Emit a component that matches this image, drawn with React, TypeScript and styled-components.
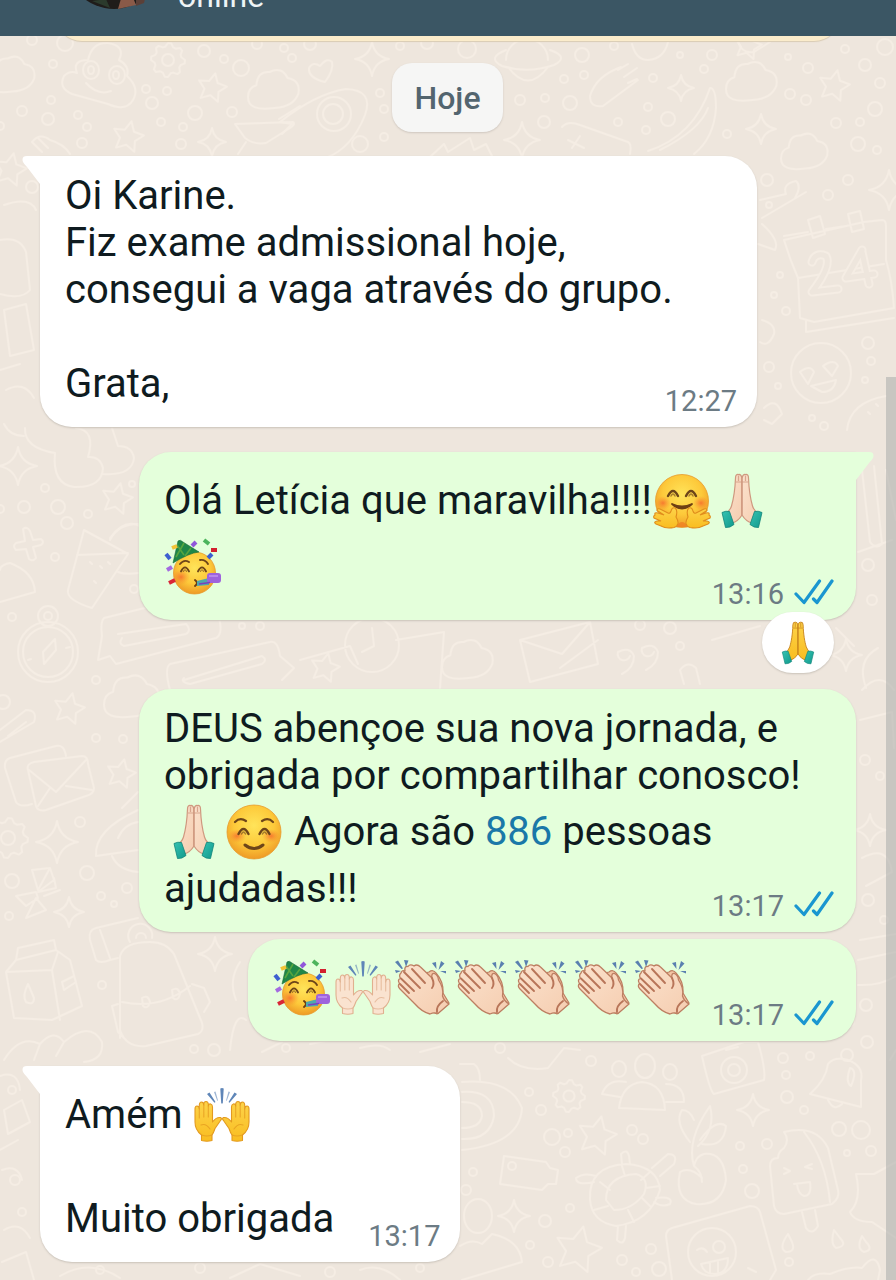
import React from 'react';
import styled, { createGlobalStyle } from 'styled-components';

const GlobalStyle = createGlobalStyle`
  *, *::before, *::after { box-sizing: border-box; }
  html, body { margin: 0; padding: 0; }
  body { background: #eee6dd; font-family: Roboto, "Liberation Sans", sans-serif; color: #0f1b20; }
`;

const Screen = styled.div`
  position: relative;
  display: flex;
  flex-direction: column;
  min-height: 100vh;
  overflow: hidden;
`;

const Wallpaper = styled.svg`
  position: absolute;
  inset: 0;
  width: 100%;
  height: 100%;
`;

const Header = styled.header`
  position: relative;
  z-index: 2;
  display: flex;
  align-items: flex-end;
  gap: 16px;
  height: 36px;
  padding: 0 66px 27px;
  background: #3b5664;
  overflow: hidden;
`;

const Avatar = styled.svg`
  flex: none;
  width: 96px;
  height: 96px;
`;

const Status = styled.span`
  font-size: 32px;
  line-height: 26px;
  color: #eef4f6;
`;

const Chat = styled.main`
  position: relative;
  display: flex;
  flex-direction: column;
  flex: 1;
  padding: 0 40px 19px;
`;

const Notice = styled.div`
  height: 60px;
  margin: -55px 16px 22px;
  border-radius: 26px;
  background: #fbeccb;
  box-shadow: 0 1px 1px #d9cbb3;
`;

const DayLabel = styled.div`
  align-self: center;
  margin-bottom: 24px;
  margin-right: 1px;
  padding: 17px 22px 15px;
  border-radius: 20px;
  background: #f6f6f5;
  box-shadow: 0 1px 2px #cfc7bf;
  color: #53656f;
  font-size: 32px;
  font-weight: 500;
  line-height: 37px;
`;

const Messages = styled.ol`
  display: flex;
  flex-direction: column;
  align-items: flex-start;
  margin: 0;
  padding: 0;
  list-style: none;
`;

type BubbleProps = { $out?: boolean; $full?: boolean; $tail?: boolean; $gap?: number };

const Bubble = styled.li<BubbleProps>`
  position: relative;
  display: grid;
  grid-template-columns: ${p => (p.$full ? '1fr' : 'auto auto')};
  column-gap: ${p => (p.$out ? 19 : 34)}px;
  align-self: ${p => (p.$out ? 'flex-end' : 'flex-start')};
  width: ${p => (p.$full ? 'calc(100% - 99px)' : 'auto')};
  max-width: calc(100% - 99px);
  margin-top: ${p => p.$gap ?? 0}px;
  padding: 16px ${p => (p.$out ? 22 : 20)}px 19px 25px;
  border-radius: 32px;
  ${p => p.$tail && (p.$out ? 'border-top-right-radius: 0;' : 'border-top-left-radius: 0;')}
  background: ${p => (p.$out ? '#e4ffdb' : '#ffffff')};
  box-shadow: 0 1px 2px #c9c2b9;
`;

const TailShape = styled.svg<{ $out?: boolean }>`
  position: absolute;
  top: 0;
  ${p => (p.$out ? 'right: -18px; transform: scaleX(-1);' : 'left: -18px;')}
  width: 19px;
  height: 32px;
`;

const Body = styled.div`
  grid-area: 1 / 1;
  min-width: 0;
  padding-bottom: 1px;
`;

const Line = styled.div<{ $tall?: boolean }>`
  min-height: ${p => (p.$tall ? 66 : 47)}px;
  font-size: 40px;
  line-height: ${p => (p.$tall ? 66 : 47)}px;
`;

const Meta = styled.div<{ $full?: boolean }>`
  grid-area: 1 / ${p => (p.$full ? 1 : 2)};
  place-self: end;
  display: flex;
  align-items: center;
  gap: 10px;
  margin-bottom: -10px;
  color: #6c7b84;
  font-size: 29px;
  line-height: 34px;
`;

const Ticks = styled.svg`
  width: 40px;
  height: 28px;
  margin-bottom: 4px;
`;

const NumberLink = styled.a`
  color: #1a78a8;
  text-decoration: none;
`;

const Glyph = styled.svg<{ $size: number }>`
  width: ${p => p.$size}px;
  height: ${p => p.$size}px;
  margin: -4px ${p => (p.$size > 50 ? 2 : 0)}px 0;
  vertical-align: middle;
  overflow: visible;
`;

const Reaction = styled.button`
  position: absolute;
  right: 22px;
  bottom: -53px;
  z-index: 1;
  display: flex;
  align-items: center;
  justify-content: center;
  width: 72px;
  height: 61px;
  padding: 4px 0 0;
  border: 0;
  border-radius: 31px;
  background: #fff;
  box-shadow: 0 1px 2px #c9c2b9;
`;

const ScrollThumb = styled.div`
  position: absolute;
  right: 0;
  top: 377px;
  bottom: 0;
  width: 10px;
  background: rgba(170, 172, 170, 0.55);
`;

/* ---------- Emoji ---------- */

type EmojiName = 'party' | 'hug' | 'pray' | 'prayYellow' | 'smile' | 'raise' | 'raiseYellow' | 'clap';

const labels: Record<EmojiName, string> = {
  party: 'Rosto festivo',
  hug: 'Rosto abraçando',
  pray: 'Mãos juntas',
  prayYellow: 'Mãos juntas',
  smile: 'Rosto sorridente',
  raise: 'Mãos para cima',
  raiseYellow: 'Mãos para cima',
  clap: 'Mãos aplaudindo',
};

const HiddenDefs = styled.svg`
  position: absolute;
  width: 0;
  height: 0;
`;

const EmojiDefs = () => (
  <HiddenDefs aria-hidden="true">
    <defs>
      <radialGradient id="face" cx="0.5" cy="0.38" r="0.62">
        <stop offset="0" stopColor="#ffe45a" />
        <stop offset="0.6" stopColor="#fdc93a" />
        <stop offset="1" stopColor="#ee9a26" />
      </radialGradient>
      <radialGradient id="blush">
        <stop offset="0" stopColor="#f5602c" stopOpacity="0.75" />
        <stop offset="1" stopColor="#f58a2c" stopOpacity="0" />
      </radialGradient>
      <linearGradient id="skin" x1="0" y1="0" x2="1" y2="1">
        <stop offset="0" stopColor="#fbe2cd" />
        <stop offset="1" stopColor="#f5cdb0" />
      </linearGradient>
      <linearGradient id="gold" x1="0" y1="0" x2="0" y2="1">
        <stop offset="0" stopColor="#fdd34a" />
        <stop offset="1" stopColor="#f9bd20" />
      </linearGradient>
      <linearGradient id="cuff" x1="0" y1="0" x2="1" y2="1">
        <stop offset="0" stopColor="#35c3b2" />
        <stop offset="1" stopColor="#11998c" />
      </linearGradient>
    </defs>
  </HiddenDefs>
);

const Eyes = ({ y, l, r, s = 1 }: { y: number; l: number; r: number; s?: number }) => (
  <g fill="none" stroke="#6d4519" strokeWidth={2.4 * s} strokeLinecap="round">
    {[l, r].map(x => (
      <g key={x}>
        <path d={`M${x - 5 * s} ${y + 3 * s} Q${x} ${y - 7 * s} ${x + 5 * s} ${y + 3 * s}`} />
        <path d={`M${x - 2 * s} ${y + 3 * s} Q${x} ${y - 1 * s} ${x + 2 * s} ${y + 3 * s}`} strokeWidth={1.5 * s} opacity="0.6" />
      </g>
    ))}
  </g>
);

const PrayArt = ({ fill, line }: { fill: string; line: string }) => (
  <g stroke={line} strokeWidth="1.2" strokeLinejoin="round">
    <g fill={fill}>
      <path d="M28 5 Q27 1 24.500 1.500 Q21.500 1 21.500 5 C21 18 19.500 26 17.500 33 Q16 38 11 41 L18 50 Q24 48.500 28 42Z" />
      <path d="M28 5 Q29 1 31.500 1.500 Q34.500 1 34.500 5 C35 18 36.500 26 38.500 33 Q40 38 45 41 L38 50 Q32 48.500 28 42Z" />
    </g>
    <path d="M28 4V42M22 9h12M24.500 2.500V8M31.500 2.500V8" fill="none" opacity="0.8" />
    <path d="M8 39.500 Q12 37.500 15.500 38.500 L20 51.500 Q16 55 11.500 54.500Z" fill="url(#cuff)" stroke="#0f8479" strokeWidth="0.8" />
    <path d="M48 39.500 Q44 37.500 40.500 38.500 L36 51.500 Q40 55 44.500 54.500Z" fill="url(#cuff)" stroke="#0f8479" strokeWidth="0.8" />
  </g>
);

const RaiseArt = ({ fill, line }: { fill: string; line: string }) => {
  const hand =
    'M7.500 53.500 V48 Q1 43 1 35 V22 Q1 19 3 19 Q5 19 5.300 22 V18 Q5.500 15 7.500 15 Q9.500 15 9.800 18 V17 Q10 14.500 12 14.500 Q14 14.500 14.300 17 V19 Q14.800 16.500 16.700 17 Q18.500 17.500 18.500 20 V35 Q22 30 26.500 30.500 Q28.500 31.500 26.500 33.500 L21 41.500 Q19.500 46 18 48 V53.500 Q13 55 7.500 53.500Z';
  const marks = 'M5.300 22v9M9.800 18v12M14.300 19v11M7 38Q12 36 16 42M7.500 48Q13 50 18 48';
  return (
    <g stroke={line} strokeWidth="1.100" strokeLinejoin="round" strokeLinecap="round">
      {['', 'translate(56 0) scale(-1 1)'].map(t => (
        <g key={t} transform={t}>
          <path d={hand} fill={fill} />
          <path d={marks} fill="none" opacity="0.75" />
        </g>
      ))}
      <g stroke="none" fill="#5f86b8">
        <path d="M26.300 1.500Q28 0.500 29.700 1.500L28.800 16Q28 17.500 27.200 16Z" />
        <path d="M13 7L15.500 5.500L21.500 15L20.500 15.800Z M43 7L40.500 5.500L34.500 15L35.500 15.800Z" />
        <path d="M20 5l1.500-.6L24 13.500l-.8.300Z M36 5l-1.500-.6L32 13.500l.8.300Z" opacity="0.6" />
      </g>
    </g>
  );
};

const art: Record<EmojiName, React.ReactNode> = {
  smile: (
    <g>
      <circle cx="28" cy="28" r="27" fill="url(#face)" stroke="#e79a2c" strokeWidth="0.8" />
      <ellipse cx="11" cy="32" rx="9" ry="7" fill="url(#blush)" />
      <ellipse cx="45" cy="32" rx="9" ry="7" fill="url(#blush)" />
      <path d="M9 18Q14 13 20 17M36 17Q42 13 47 18" fill="none" stroke="#6d4519" strokeWidth="2.200" strokeLinecap="round" />
      <path d="M19 41Q28 48 37 41" fill="none" stroke="#6d4519" strokeWidth="3" strokeLinecap="round" />
      <Eyes y={27} l={17.5} r={38.5} />
    </g>
  ),
  hug: (
    <g>
      <circle cx="28" cy="28" r="26.500" fill="url(#face)" stroke="#e79a2c" strokeWidth="0.8" />
      <ellipse cx="9" cy="30" rx="8" ry="7" fill="url(#blush)" />
      <ellipse cx="47" cy="30" rx="8" ry="7" fill="url(#blush)" />
      <path d="M18 31Q28 40 38 31Q28 36 18 31Z" fill="#6d3f13" stroke="#6d3f13" strokeWidth="1.800" strokeLinejoin="round" />
      <Eyes y={20} l={19} r={37} />
      <path d="M22 54Q28 44 34 54Z" fill="#ef7a22" opacity="0.7" />
      {['', 'translate(56 0) scale(-1 1)'].map(t => (
        <path
          key={t}
          transform={t}
          d="M1 42Q0 39 4 40L10 42L3 37.500Q3 35 6 36L14 40Q16 41 17 38Q18 34 21 35Q24 37 22 44Q27 52 20 54.500Q12 56 7 53L2 51Q-1 49 3 48L7 48L0 45Q-1 43 1 42Z"
          fill="url(#gold)"
          stroke="#e08d1c"
          strokeWidth="1.100"
        />
      ))}
    </g>
  ),
  party: (
    <g>
      <circle cx="28.500" cy="34" r="21" fill="url(#face)" stroke="#e79a2c" strokeWidth="0.8" />
      <ellipse cx="15" cy="38" rx="9" ry="8" fill="url(#blush)" />
      <path d="M7 24L12 2Q14 0 17 3L33 13Q23 14 7 24Z" fill="#1f8748" stroke="#176b39" strokeWidth="0.6" />
      <path d="M11 6l7 10M18 4l-8 14M25 9l-6 8" stroke="#57a53f" strokeWidth="1.600" fill="none" />
      <path d="M14 25Q18 20 23 23M34 21Q39 20 42 25" fill="none" stroke="#6d4519" strokeWidth="1.900" strokeLinecap="round" />
      <Eyes y={30} l={19} r={36} s={0.8} />
      <path d="M29 41Q33 44 29 47" fill="none" stroke="#6d3f13" strokeWidth="2" strokeLinecap="round" />
      <path d="M31 42L43 39V46L31 47Z" fill="#4fa8ac" />
      <rect x="41" y="34" width="14" height="10" rx="3" fill="#9e63dc" />
      <path d="M43 37H52" stroke="#b987ec" strokeWidth="2" />
      <path d="M33 45L44 43.500" stroke="#7a3fc0" strokeWidth="1.600" />
      <g strokeWidth="4" fill="none">
        <path d="M0 15l4 5" stroke="#3d5fd0" />
        <path d="M1 31l5-3" stroke="#a36be0" />
        <path d="M3 44l6-3" stroke="#d92638" />
        <path d="M6 9l5-2" stroke="#f2c437" />
        <path d="M26 7l4-4" stroke="#9157da" />
        <path d="M38 1l5 4" stroke="#4cb45c" />
        <path d="M45 11h6" stroke="#d3202f" />
        <path d="M42 19l4-4" stroke="#3d5fd0" />
      </g>
    </g>
  ),
  pray: <PrayArt fill="url(#skin)" line="#cf987f" />,
  prayYellow: <PrayArt fill="url(#gold)" line="#c9861d" />,
  raise: <RaiseArt fill="#fae3d0" line="#e0b08f" />,
  raiseYellow: <RaiseArt fill="url(#gold)" line="#e39a1f" />,
  clap: (
    <g strokeLinejoin="round" strokeLinecap="round">
      <path d="M26 14L34 12Q38 9 41 13Q49 22 48 33L54 43L42 54L33 50Z" fill="#f3c6a5" stroke="#bd7f62" strokeWidth="1.200" />
      <path
        d="M6 13Q7 9.500 10 11Q9 6 13 6.500Q15 3.500 19 6Q22 3.500 25.500 7L37 18Q36 13 39.500 13.500Q43 15 43.500 20Q49 28 47.500 36Q49 41 54 44L43 53.500Q39 52 35 54Q27 52 20 44L5 29Q2 26 4.500 23.500Q2 19.500 5.500 18.500Q3.500 15 6 13Z"
        fill="url(#skin)"
        stroke="#bd7f62"
        strokeWidth="1.300"
      />
      <path d="M5 24L14 33M6 18.500L19 31M9 12L25 28M17 9L30 23M37 18Q40 24 37 28M42 52Q41 46 48 41" fill="none" stroke="#b87559" strokeWidth="1.900" />
      <g fill="#5a80b0">
        <path d="M0 2L3 0.500L8 8.500L6.500 9Z M9 0L13.500 0.500L11 7Z M0 10L6 11L1 13Z" />
        <path d="M46 1L49.500 3.500L43.500 10Z M37 3L41 2L41.500 9Z M45 11L51 11L51 13.500Z" />
      </g>
    </g>
  ),
};

const Emoji = ({ name, size = 56 }: { name: EmojiName; size?: number }) => (
  <Glyph $size={size} viewBox="0 0 56 56" role="img" aria-label={labels[name]}>
    {art[name]}
  </Glyph>
);

/* ---------- Wallpaper doodles ---------- */

const rings = `32,40,5 65,43,8 53,64,4 51,100,4 22,111,5 48,119,6 78,115,4 87,127,4 82,143,5 0,126,4 146,89,4 167,91,4
152,103,6 195,113,7 161,122,4 183,127,4 181,144,5 204,51,6 224,59,4 241,68,8 257,44,5 284,48,4 292,58,4 232,112,5
32,187,6 310,44,6 400,46,4 427,43,6 467,49,9 380,93,4 384,109,4 360,144,8 384,137,4 520,100,5 545,98,4 544,122,6 564,79,4
582,55,7 584,75,4 614,46,4 570,103,7 653,78,4 648,107,4 668,119,7 646,130,4 618,122,4 680,55,3 712,55,5
704,69,4 727,134,4 788,57,3 808,68,5 790,94,5 806,100,5 845,49,4 865,65,6 885,47,8 880,83,5 875,109,7 860,122,4 836,123,5
858,144,7 877,150,4 767,180,6 848,180,5 828,195,5 769,205,3 780,275,3 774,295,3 786,311,4 868,343,6 871,361,4 769,367,5
865,380,3 778,386,3 812,418,3 824,426,4 45,488,4 24,507,6 58,507,7 0,509,4 88,514,4 67,523,6 55,557,4 132,484,3 134,589,4
12,617,4 96,680,4 3,702,7 96,738,4 123,739,4 80,822,5 87,873,7 12,881,7 101,896,4 127,888,5 114,904,3 9,916,4 102,985,4
194,1049,4 214,1050,6 242,626,3 260,626,4 286,1048,4 640,625,5 670,628,6 680,646,4 868,565,6 872,600,5 865,760,5 880,776,4
868,900,6 884,920,4 866,1005,6 850,1022,4 500,1048,5 591,1061,5 529,1092,4 541,1110,5 552,1137,8 568,1133,4 565,1152,5
632,1130,5 643,1139,5 473,1172,4 466,1190,5 570,1208,4 545,1221,6 530,1245,4 548,1262,5 651,1249,5 622,1260,5 636,1272,4
659,1269,7 783,1058,5 810,1056,4 786,1075,4 787,1097,6 804,1110,4 740,1146,4 767,1144,5 743,1169,4 752,1191,7 839,1129,7
861,1130,9 871,1151,5 847,1153,3 789,1262,4 867,1042,6 12,1090,4 15,1180,5 22,1212,4 100,1270,4 200,1268,5 330,1272,5
420,1268,4`
  .split(/\s+/)
  .map(t => t.split(',').map(Number));

const stars = [
  [212, 88, 15], [128, 137, 16], [10, 170, 17], [834, 86, 16], [117, 499, 16], [69, 709, 16], [121, 774, 15],
  [748, 46, 14], [597, 1136, 20], [325, 668, 15], [578, 1250, 24],
];
const sparks = [
  [212, 142, 14], [372, 59, 17], [522, 140, 18], [681, 88, 13], [761, 129, 15], [889, 190, 20], [18, 466, 19], [57, 842, 21],
  [69, 912, 15], [215, 954, 17], [753, 1110, 16], [514, 1216, 16], [846, 655, 16], [870, 830, 16],
];
const clouds = [
  [10, 75, 1.1], [272, 90, 1.2], [750, 82, 1.2], [803, 152, 1.1], [130, 697, 1.3], [466, 660, 1.2],
];
const gears = [
  [168, 60, 17], [8, 838, 20], [569, 1096, 16],
];

const starPath = (r: number) =>
  Array.from({ length: 10 }, (_, i) => {
    const a = (i * Math.PI) / 5 - 1.35;
    const d = i % 2 ? r * 0.5 : r;
    return `${i ? 'L' : 'M'}${(Math.cos(a) * d).toFixed(1)} ${(Math.sin(a) * d).toFixed(1)}`;
  }).join('') + 'Z';

const gearPath = (r: number) =>
  Array.from({ length: 32 }, (_, i) => {
    const a = (i * Math.PI) / 16;
    const d = i % 4 < 2 ? r : r * 0.8;
    return `${i ? 'L' : 'M'}${(Math.cos(a) * d).toFixed(1)} ${(Math.sin(a) * d).toFixed(1)}`;
  }).join('') + 'Z';

const sparkPath = (r: number) =>
  `M0 ${-r}Q${r * 0.15} ${-r * 0.15} ${r} 0Q${r * 0.15} ${r * 0.15} 0 ${r}Q${-r * 0.15} ${r * 0.15} ${-r} 0Q${-r * 0.15} ${-r * 0.15} 0 ${-r}Z`;

const drawings = [
  // smiling pile
  'M88 60Q92 42 108 43Q126 46 119 60Q130 66 127 76Q140 88 133 100Q126 112 108 104L72 94Q58 88 64 76Q70 70 77 73Q72 60 88 60ZM86 83Q98 96 111 91',
  'M83 70a8 9 0 1 0 16 0a8 9 0 1 0-16 0M88 70a3 4 0 1 0 6 0a3 4 0 1 0-6 0M109 75a8 9 0 1 0 16 0a8 9 0 1 0-16 0M113 75a3 4 0 1 0 6 0a3 4 0 1 0-6 0',
  // fork and cap
  'M32 142Q40 132 50 140Q64 144 70 154M32 142l10 10M38 138l10 10M235 124L293 122Q296 124 290 128L266 143Q254 145 245 138ZM279 119L300 106M246 142L238 154',
  // heart
  'M325 82Q308 78 309 68Q313 61 320 66Q327 57 332 62Q334 70 325 82Z',
  // comet
  'M280 122Q315 94 346 89Q374 90 365 115Q352 148 326 158M280 122L292 124L282 134M317 114a17 17 0 1 0 34 0a17 17 0 1 0-34 0M323 114a10 10 0 1 0 20 0a10 10 0 1 0-20 0',
  // planet
  'M506 60a21 21 0 1 1 42 0M508 67Q528 94 548 67M506 50Q486 58 502 66Q528 74 554 65Q570 57 550 50M430 157L444 144L448 152L470 138L474 150L486 144L492 156',
  // mitten, banana, game pad
  'M621 67Q596 76 590 96Q590 108 603 106L638 80M618 70l10-6M624 77l13-9M628 83l9-4M648 151Q694 136 710 88Q716 88 716 108Q714 138 694 154M660 150Q700 130 708 108M562 127Q568 120 580 125L628 142Q632 144 630 154M568 140l16 8M572 148l8-12',
  'M632 44Q636 60 648 60Q664 59 668 42M738 42Q742 54 754 52L770 42',
  // rocket tail
  'M760 200L786 194M786 194Q782 184 796 181Q802 186 795 198M806 192L762 218M762 224Q780 240 775 250L758 244',
  // calendar
  'M784 236L808 232M826 229L846 226M864 222L882 220Q886 220 886 226L886 260Q892 280 894 308L814 322L800 318L798 278Q790 260 784 240ZM798 278L884 264M806 320L806 332L894 318M808 220l12-4l5 18l-12 4ZM848 214l12-3l4 18l-12 3Z',
  // heart-eyed face
  'M791 373a30 30 0 1 0 60 0a30 30 0 1 0-60 0M800 372Q810 364 814 372L808 384ZM823 366Q834 358 838 366L832 376ZM811 386L836 380Q834 392 822 392Z',
  'M847 430Q850 402 886 396M868 412l2 2M876 404l2 2M762 320q14 4 12 14q-6 14-14 8M764 408Q776 396 782 414L772 424L764 420',
  // left strip
  'M4 205Q30 196 36 210M0 240Q20 236 26 252L30 290Q22 300 0 294M4 310L26 304L34 350L10 356ZM0 370L20 364M6 390Q24 380 34 398',
  'M25 428Q24 448 55 453Q52 484 74 487Q102 488 103 468Q100 456 88 457Q96 430 76 428M103 474Q132 476 134 458Q132 446 118 446L112 428M4 424Q10 436 24 436',
  // glass
  'M84 530L68 590Q66 600 92 608L128 554ZM77 555L128 553M110 538Q124 518 140 526M90 562l2 2M100 566l2 2M108 562l2 2M94 581l2 2',
  'M110 540Q118 524 138 524M118 572Q126 575 138 573M0 602L35 592Q34 572 10 563Q0 565 0 570',
  // plus-shaped flower
  'M23 529q4-3 7 2l3 9l8-1q4 3 0 6l-8 2l3 11q-3 4-7 1l-3-10l-10 1q-4-4 0-7l9-2Z',
  // compass
  'M18 652a30 30 0 1 0 60 0a30 30 0 1 0-60 0M23 652a25 25 0 1 0 50 0a25 25 0 1 0-50 0M38 616a10 10 0 1 1 20 0a10 10 0 0 1-20 0M44 616a4 4 0 1 0 8 0a4 4 0 1 0-8 0M55 639L43 652L44 664L56 650ZM28 660l3-1M66 648l4-1',
  // chat notes
  'M104 618L218 590M104 618Q100 622 102 636L98 660L110 656L116 664L216 638Q224 634 218 614M118 634L186 624Q192 630 186 634L124 646Q118 644 122 638M170 690Q164 668 170 664L270 642Q278 640 280 656L294 668L282 680M184 680L262 656Q268 660 262 664L190 684Q180 682 184 678',
  // middle strip
  'M300 660L350 646L358 664M345 645a27 27 0 1 0 54 0a27 27 0 1 0-54 0M372 628l2 18l-12 6M396 640L444 632L440 688M520 640L590 622L598 664L530 682ZM520 640L562 654L590 622M560 668L598 640',
  'M618 652Q630 646 634 656Q634 668 622 674M618 652a6 6 0 1 0 12 4M642 648Q654 642 658 652Q658 664 646 670M642 648a6 6 0 1 0 12 4M684 684L680 670Q688 660 696 668L700 684M712 640L760 626M836 628L854 646M866 688Q856 660 878 648',
  // envelopes
  'M66 756Q64 744 56 746L10 758Q4 760 5 768L16 802Q20 808 32 804M28 770Q26 764 34 762L82 756Q88 756 88 764L94 788Q94 794 86 796L46 810Q38 812 36 806ZM29 770L56 792L86 760M38 806L50 788M66 786L92 790M0 730L26 710Q38 710 34 722L0 742M8 736L26 722',
  // helmet
  'M96 856Q94 830 138 810M96 856L138 850M118 838Q124 824 138 822M112 856Q118 870 138 872M122 808L138 792',
  // pinwheel
  'M32 870L50 868L38 890ZM50 868L54 880L38 892L56 888L54 878M36 892L16 896L26 906L38 898ZM36 898L26 918L46 910ZM44 896L60 890',
  // carton
  'M18 948L54 940L56 950L16 960ZM16 960L6 972L14 1018L52 1020L82 1006L70 960L56 950M6 972L52 970L60 1020M52 970L58 952M28 984q-6 12-2 18q8 4 8-4ZM62 982l12-6l2 6l-12 8Z',
  // camera and backpack
  'M138 918L96 928Q88 930 90 940L96 960Q100 964 110 960L118 958M100 930L110 958M130 942a12 12 0 1 1 22-4M136 938a5 5 0 1 1 10 0M160 920L186 930M120 1038L120 956Q124 942 150 942Q166 942 174 954L200 1018Q206 1030 198 1034L146 1046Q126 1048 120 1030M122 1002Q160 1010 190 986M142 998q6-4 8 4q-2 8-7 4ZM172 990q6-4 8 4q-2 8-7 4ZM118 1004L112 1006L118 1032L126 1040M192 984L204 988L210 1002L204 1012M240 962Q228 980 236 1000',
  // bread
  'M4 1060Q20 1034 40 1044L34 1060M40 1044Q54 1028 64 1042L56 1056M64 1042Q90 1020 102 1042Q104 1060 84 1062M230 1050Q234 1010 246 1020',
  'M0 1076Q18 1070 20 1090M4 1110L22 1100L30 1122L8 1134ZM0 1150L18 1140M2 1170q16-6 20 10M4 1230Q20 1220 30 1238M2 1262L26 1252L34 1280M60 1276Q90 1258 120 1278M230 1278L260 1264L300 1276M360 1270Q380 1262 400 1280',
  'M310 1044L340 1038M360 1048Q380 1042 390 1050M420 1052L450 1044M262 1052L282 1042',
  // people
  'M635 1066a10 12 0 1 0 20 0a10 12 0 1 0-20 0M612 1069a7 8 0 1 0 14 0a7 8 0 1 0-14 0M619 1108L665 1110Q664 1084 642 1082Q622 1084 619 1108ZM663 1072a7 8 0 1 0 14 0a7 8 0 1 0-14 0M602 1094Q608 1078 626 1082M602 1094L620 1097M666 1084Q684 1084 684 1102L666 1102',
  // pot, lens
  'M508 1058Q522 1072 548 1068L564 1048L580 1050M460 1064L474 1064Q480 1068 480 1080M462 1082Q510 1078 522 1108Q520 1144 462 1150M462 1092Q494 1090 494 1116Q490 1140 462 1139M462 1102Q482 1102 482 1116Q480 1128 462 1128',
  // camera
  'M702 1056L744 1042L758 1042Q766 1070 764 1080L714 1094Q710 1092 702 1056ZM721 1070a13 13 0 1 0 26 0a13 13 0 1 0-26 0M728 1070a6 6 0 1 0 12 0a6 6 0 1 0-12 0M726 1050l12-3',
  // bell
  'M810 1094Q826 1080 828 1064Q834 1056 848 1060Q864 1066 861 1080L861 1107ZM841 1055a6 6 0 1 1 12 0a6 6 0 1 1-12 0M828 1100Q834 1112 842 1104M850 1068q8 2 1 18q-6-4-1-18',
  // cherry
  'M702 1178Q690 1166 680 1172Q674 1200 696 1204Q722 1206 726 1180Q724 1152 704 1154Q696 1156 694 1166Q702 1172 702 1182M694 1166Q686 1140 710 1106Q716 1130 698 1146M690 1142Q674 1122 682 1110Q690 1110 694 1120M700 1140Q716 1118 726 1126Q724 1148 702 1144',
  // video
  'M504 1156L546 1162L550 1168L558 1170L556 1184L548 1184L542 1190L500 1184ZM508 1166a4 4 0 1 0 8 0a4 4 0 1 0-8 0',
  // turtle
  'M590 1200Q588 1166 626 1164Q658 1166 660 1190Q650 1222 616 1226Q592 1222 590 1200ZM606 1200Q606 1176 636 1174Q650 1178 644 1194Q632 1210 614 1210ZM600 1182l10 8M622 1166l3 10M650 1172l-9 8M660 1186l-14 2M650 1206l-8-8M634 1222l-6-12M594 1210l14-4M618 1226l-1 14q6 6 8-2l1-12M622 1164l-1-10q6-6 8 2l1 8M652 1168l16-14q10 0 6 10l-14 12M594 1182q-18 4-18-4q8-6 20-2M656 1198q18-2 14 6q-8 4-16-2',
  // ice cream
  'M784 1132Q816 1124 828 1148L838 1190Q840 1198 832 1204L784 1214Q776 1214 774 1206L770 1166Q770 1158 778 1158Q778 1152 784 1148Q790 1140 784 1132ZM804 1132Q826 1160 830 1202M784 1168l6 3l-6 3M812 1164l-7 3l7 2M794 1184L810 1182Q812 1196 804 1196Q798 1194 797 1184M802 1212l4 16q6 8 12-2l-3-16',
  // photo
  'M672 1280L666 1236Q666 1230 672 1228L750 1206Q758 1206 760 1212L776 1270L770 1280M688 1252a24 24 0 1 0 48 0a24 24 0 1 0-48 0M697 1250q6-4 10 2M713 1247a6 6 0 1 0 12 0a6 6 0 1 0-12 0M701 1264L728 1258Q728 1274 714 1274Q704 1274 701 1264M710 1263v10M718 1262v10M748 1268l8 4',
  // person
  'M464 1216a14 17 0 1 0 28 0a14 17 0 1 0-28 0M460 1246Q472 1238 482 1244L492 1234Q520 1240 522 1262L462 1280',
  // drops, coast
  'M788 1234q-10 14-2 18q10 0 6-10ZM834 1230q-4 14 2 18q12-2 4-10ZM862 1236q-6 12 2 16q10-2 2-10ZM896 1162L874 1174L856 1174Q862 1200 850 1212Q854 1222 872 1222L896 1238M808 1280Q814 1272 830 1274Q850 1266 862 1268Q876 1250 880 1270L878 1280',
  // right strip
  'M862 470L870 542Q876 550 882 544L874 466M858 552L892 540M862 690Q880 670 894 690M860 720L892 712L894 748M862 858Q888 844 892 872L866 886M860 940L896 934M858 960L896 952M858 985Q880 986 896 976M886 470L896 520M890 1060L896 1050',
];

/* Calendar page numerals, drawn as hollow bands */
const calendarBands = 'M812 262Q815 252 826 256Q832 266 812 292L838 289M862 250L846 278L874 274M862 252L869 284';

const ChatWallpaper = () => (
  <Wallpaper aria-hidden="true">
    <defs>
      <pattern id="doodles" width="896" height="1280" patternUnits="userSpaceOnUse">
        <g fill="none" stroke="#f5ede4" strokeWidth="2" strokeLinecap="round" strokeLinejoin="round">
          {rings.map(([x, y, r], i) => (
            <circle key={i} cx={x} cy={y} r={r} />
          ))}
          {stars.map(([x, y, r]) => (
            <path key={`${x}-${y}`} transform={`translate(${x} ${y})`} d={starPath(r)} />
          ))}
          {sparks.map(([x, y, r]) => (
            <path key={`${x}-${y}`} transform={`translate(${x} ${y})`} d={sparkPath(r)} />
          ))}
          {clouds.map(([x, y, s]) => (
            <path
              key={`${x}-${y}`}
              transform={`translate(${x} ${y}) scale(${s})`}
              strokeWidth={2 / s}
              d="M-20 6Q-20-2-13-4Q-12-16-2-15Q8-20 13-10Q24-8 22 3Q18 14 2 15Q-20 18-20 6Z"
            />
          ))}
          {gears.map(([x, y, r]) => (
            <g key={`${x}-${y}`} transform={`translate(${x} ${y})`}>
              <circle r={r * 0.35} />
              <path d={gearPath(r)} />
            </g>
          ))}
          {drawings.map(d => (
            <path key={d} d={d} />
          ))}
          <path d={calendarBands} strokeWidth="9" />
          <path d={calendarBands} strokeWidth="5" stroke="#eee6dd" />
        </g>
      </pattern>
    </defs>
    <rect width="100%" height="100%" fill="url(#doodles)" />
  </Wallpaper>
);

/* ---------- Message parts ---------- */

const Tail = ({ out }: { out?: boolean }) => (
  <TailShape $out={out} viewBox="0 0 19 32" aria-hidden="true">
    <path d="M19 0H5Q-1 0 1 6Q2 8 5 11L18 28V32H19Z" fill={out ? '#e4ffdb' : '#ffffff'} />
  </TailShape>
);

const Stamp = ({ time, read, full }: { time: string; read?: boolean; full?: boolean }) => (
  <Meta $full={full}>
    <time dateTime={time}>{time}</time>
    {read && (
      <Ticks viewBox="0 0 40 28" role="img" aria-label="Lida">
        <path
          d="M2 16L10 24.500L25.500 3M19.500 21L23 24.500L38 3"
          fill="none"
          stroke="#1a96d0"
          strokeWidth="3.200"
          strokeLinecap="round"
          strokeLinejoin="round"
        />
      </Ticks>
    )}
  </Meta>
);

export default function App() {
  return (
    <Screen>
      <GlobalStyle />
      <EmojiDefs />
      <ChatWallpaper />
      <Header>
        <Avatar viewBox="0 0 96 96" role="img" aria-label="Foto do contato">
          <circle cx="48" cy="48" r="48" fill="#1f1c1a" />
          <path d="M52 96L56 82L66 82L70 92Z" fill="#8a5a48" />
          <path d="M70 86L80 82L78 90L70 93Z" fill="#5b4038" />
          <path d="M26 88L40 86L44 95Z" fill="#2b3a2c" />
        </Avatar>
        <Status>online</Status>
      </Header>
      <Chat>
        <Notice />
        <DayLabel>Hoje</DayLabel>
        <Messages>
          <Bubble $full $tail>
            <Tail />
            <Body>
              <Line>Oi Karine.</Line>
              <Line>Fiz exame admissional hoje,</Line>
              <Line>consegui a vaga através do grupo.</Line>
              <Line />
              <Line>Grata,</Line>
            </Body>
            <Stamp full time="12:27" />
          </Bubble>

          <Bubble $out $full $tail $gap={25}>
            <Tail out />
            <Body>
              <Line $tall>
                Olá Letícia que maravilha!!!!
                <Emoji name="hug" />
                <Emoji name="pray" />
              </Line>
              <Line $tall>
                <Emoji name="party" />
              </Line>
            </Body>
            <Stamp full read time="13:16" />
            <Reaction type="button" aria-label="Reação">
              <Emoji name="prayYellow" size={44} />
            </Reaction>
          </Bubble>

          <Bubble $out $full $gap={69}>
            <Body>
              <Line>DEUS abençoe sua nova jornada, e</Line>
              <Line>obrigada por compartilhar conosco!</Line>
              <Line $tall>
                <Emoji name="pray" />
                <Emoji name="smile" /> Agora são <NumberLink href="#886">886</NumberLink> pessoas
              </Line>
              <Line>ajudadas!!!</Line>
            </Body>
            <Stamp full read time="13:17" />
          </Bubble>

          <Bubble $out $gap={7}>
            <Body>
              <Line $tall>
                <Emoji name="party" />
                <Emoji name="raise" />
                <Emoji name="clap" />
                <Emoji name="clap" />
                <Emoji name="clap" />
                <Emoji name="clap" />
                <Emoji name="clap" />
              </Line>
            </Body>
            <Stamp read time="13:17" />
          </Bubble>

          <Bubble $tail $gap={25}>
            <Tail />
            <Body>
              <Line $tall>
                Amém <Emoji name="raiseYellow" />
              </Line>
              <Line />
              <Line>Muito obrigada</Line>
            </Body>
            <Stamp time="13:17" />
          </Bubble>
        </Messages>
      </Chat>
      <ScrollThumb />
    </Screen>
  );
}
